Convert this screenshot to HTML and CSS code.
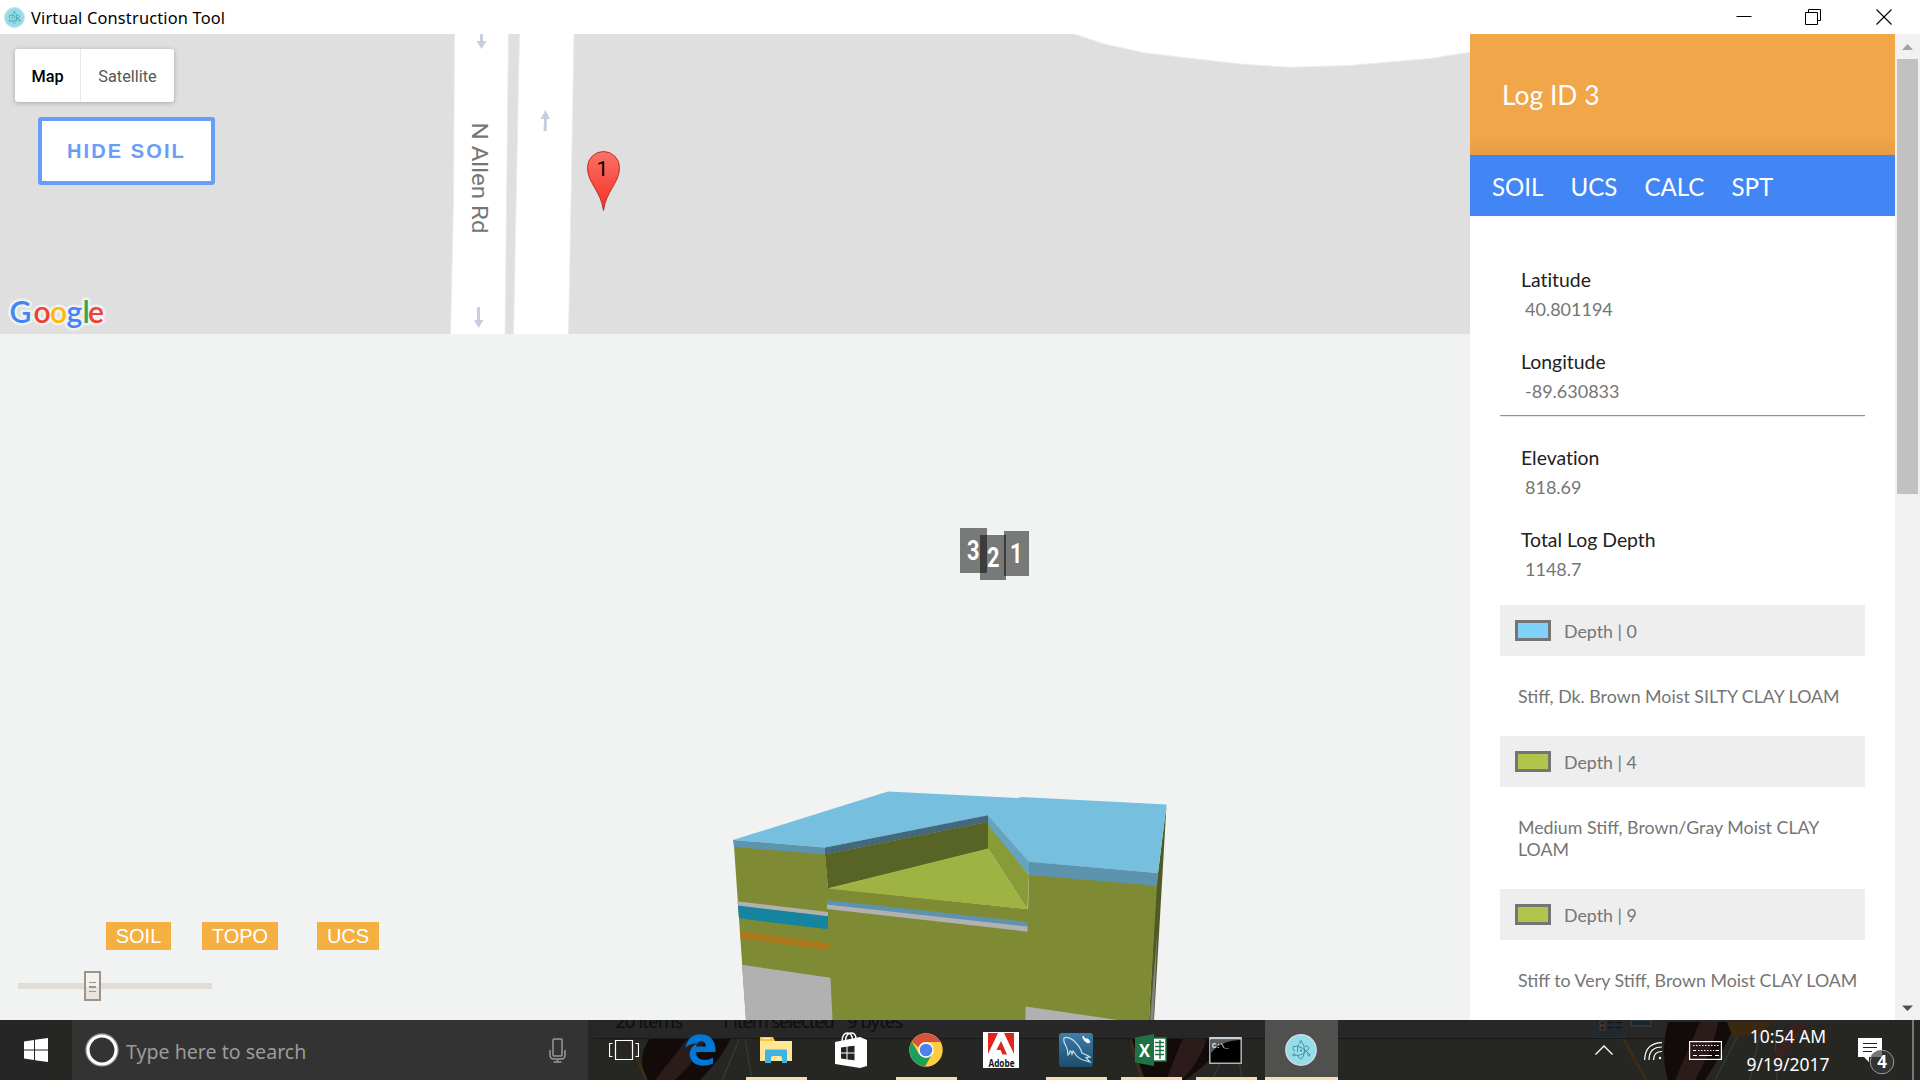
FILE: index.html
```html
<!DOCTYPE html>
<html lang="en">
<head>
<meta charset="utf-8">
<title>Virtual Construction Tool</title>
<link rel="stylesheet" href="styles.css">
</head>
<body>
<svg width="0" height="0" class="defs">
  <defs>
    <symbol id="electron" viewBox="0 0 32 32">
      <circle cx="16" cy="16" r="15.200" fill="#92dfea" stroke="#d3dcdd" stroke-width="1.400"/>
      <g fill="none" stroke="#3d7a86" stroke-width="0.800">
        <path d="M9.500 17.500Q6.500 14 8.500 12.500Q12 11 17.500 14.200Q22.500 17.500 23.500 20"/>
        <path d="M20 12Q24 12 24 13.800Q23.500 17 17.500 20Q13 22 10 21.200"/>
        <path d="M16.500 8Q19.500 10 19.500 16Q19 23.500 16 25Q13.500 24.500 12.700 21M12.500 18Q12 12.500 14 9.500"/>
        <circle cx="8.900" cy="20.800" r="1.100"/><circle cx="23.800" cy="20.800" r="1.100"/><circle cx="15.700" cy="7.700" r="1"/>
      </g>
      <circle cx="16" cy="16.500" r="1" fill="#3d7a86"/>
    </symbol>
  </defs>
</svg>
<div class="screen">
  <header class="titlebar">
    <svg class="app-icon" width="21" height="21"><use href="#electron"/></svg>
    <span class="app-title">Virtual Construction Tool</span>
    <div class="window-controls">
      <svg width="16" height="16"><path d="M0.500 7.500H15.500" stroke="#000"/></svg>
      <svg width="16" height="16" fill="none" stroke="#000"><path d="M0.500 3.500h12v12h-12zM3.500 3.500v-3h12v11h-3"/></svg>
      <svg class="close" width="16" height="16"><path d="M0.500 0.500l15 15M15.500 0.500l-15 15" stroke="#000" stroke-width="1.100"/></svg>
    </div>
  </header>

  <main class="main">
    <div class="workspace">
      <section class="map">
        <svg class="map-canvas" width="1470" height="300" viewBox="0 34 1470 300">
          <defs>
            <linearGradient id="pin" x1="0" y1="0" x2="0" y2="1"><stop offset="0" stop-color="#fb7268"/><stop offset="1" stop-color="#f52f24"/></linearGradient>
          </defs>
          <rect y="34" width="1470" height="300" fill="#dfdfdf"/>
          <g fill="#fff" stroke="#ececec">
            <path d="M1073 33.500L1102 43.500L1145 53L1240 64L1290 67.300L1350 65.500L1430 58.500L1471 52V33z"/>
            <path d="M454.500 33L453.500 200L450.500 335H505L508.500 33z"/>
            <path d="M519.500 33L513.500 335H568.500L574 33z"/>
          </g>
          <g fill="#c9cde0">
            <path d="M480 34h3v7h3.500l-5 8l-5-8h3.500z"/>
            <path d="M545.500 110l4.500 9h-3l-.5 12h-3l.5-12h-3.500z"/>
            <path d="M477 307h3v13h3.500l-5 8l-4.500-8h3z"/>
          </g>
          <text class="road-label" transform="translate(472 122.500) rotate(90)" textLength="111" lengthAdjust="spacingAndGlyphs">N Allen Rd</text>
          <path d="M603.500 210.500C601 191 587.500 183 587.500 167.500a16 16 0 0 1 32 0C619.500 183 606 191 603.500 210.500z" fill="url(#pin)" stroke="#b8312b"/>
          <text class="pin-label" x="602.500" y="175.500" text-anchor="middle">1</text>
          <g id="logo-letters" class="logo">
            <g class="logo-halo"><text y="323"><tspan x="9.500">G</tspan><tspan x="33.500">o</tspan><tspan x="50">o</tspan><tspan x="66.500">g</tspan><tspan x="82.500">l</tspan><tspan x="88">e</tspan></text></g>
            <text y="323"><tspan x="9.500" class="g-blue">G</tspan><tspan x="33.500" class="g-red">o</tspan><tspan x="50" class="g-yellow">o</tspan><tspan x="66.500" class="g-blue">g</tspan><tspan x="82.500" class="g-green">l</tspan><tspan x="88" class="g-red">e</tspan></text>
          </g>
        </svg>
        <div class="map-overlay">
          <div class="map-types"><span class="map-type active">Map</span><span class="map-type">Satellite</span></div>
          <button class="hide-soil">HIDE SOIL</button>
        </div>
      </section>

      <section class="scene">
        <svg class="scene-canvas" width="1470" height="686" viewBox="0 334 1470 686">
          <g class="solid">
            <path fill="#4f5a24" d="M1166.500 805L1158 873L1156 886L1149 1020H1154z"/>
            <path fill="#858585" d="M1157.500 930L1150 1020H1153.500z"/>
            <path fill="#7e8b34" d="M734 846L825 853L828 888L1028 909L1029 874L1157 885L1149 1020H746z"/>
            <path fill="#77bfdf" d="M733 840L888 791.500L1018 798L1021 797L1166.500 804.500L1158 873L1029 862L988 815.500L825 847.500z"/>
            <path fill="#5c94ae" d="M733 840L825 847.500V854.500L734 847zM1029 861.700L1158 873L1157 885.700L1029 875z"/>
            <path fill="#44697d" d="M825 847.500L988 815.200V822L825 854.500z"/>
            <path fill="#586326" d="M825 854.300L988 821.800V849L828 888.500z"/>
            <path fill="#899a38" d="M988 822L1029 875L1027.500 909.500L988 848.500z"/>
            <path fill="#66a3bf" d="M988 815.200L1029 861.700V875L988 825z"/>
            <path fill="#9fb342" d="M828 888.500L988 848.500L1027.500 909.300z"/>
            <path fill="#b1b1b1" d="M737 901.300L828 912V916.500L738 906zM742 964.800L830.500 977.700L832.500 1020H746zM827 904L1027.500 926V931.700L827 909zM1025.500 1006.400L1118 1020H1025.500z"/>
            <path fill="#15849f" d="M738 905.600L828 916.200V929.300L739 918.300z"/>
            <path fill="#ab781c" d="M740 931.400L829 943.300L829.300 950.200L740.500 938.300z"/>
            <path fill="#5c94ae" d="M827 900L1027.500 921.900V926.600L827 904.600z"/>
          </g>
          <g fill="#000" fill-opacity=".5">
            <rect x="960" y="528" width="27" height="45"/><rect x="980" y="535" width="26" height="45"/><rect x="1004" y="531" width="25" height="45"/>
          </g>
          <g class="log-label">
            <text x="967" y="560" textLength="12.500" lengthAdjust="spacingAndGlyphs">3</text>
            <text x="987" y="567" textLength="12.500" lengthAdjust="spacingAndGlyphs">2</text>
            <text x="1010" y="563" textLength="12.500" lengthAdjust="spacingAndGlyphs">1</text>
          </g>
        </svg>
        <div class="scene-controls">
          <div class="layer-buttons">
            <button class="layer soil">SOIL</button><button class="layer topo">TOPO</button><button class="layer ucs">UCS</button>
          </div>
          <div class="slider"><div class="slider-thumb"><i></i><i></i><i></i></div></div>
        </div>
      </section>
    </div>

    <aside class="panel">
      <div class="panel-head">Log ID 3</div>
      <nav class="tabs"><span>SOIL</span><span>UCS</span><span>CALC</span><span>SPT</span></nav>
      <div class="panel-body">
        <dl class="facts"><dt>Latitude</dt><dd>40.801194</dd><dt>Longitude</dt><dd>-89.630833</dd></dl>
        <hr class="rule">
        <dl class="facts second"><dt>Elevation</dt><dd>818.69</dd><dt>Total Log Depth</dt><dd>1148.7</dd></dl>
        <div class="depth"><i class="swatch blue"></i>Depth | 0</div>
        <p class="desc">Stiff, Dk. Brown Moist SILTY CLAY LOAM</p>
        <div class="depth"><i class="swatch"></i>Depth | 4</div>
        <p class="desc">Medium Stiff, Brown/Gray Moist CLAY<br>LOAM</p>
        <div class="depth"><i class="swatch"></i>Depth | 9</div>
        <p class="desc">Stiff to Very Stiff, Brown Moist CLAY LOAM</p>
      </div>
    </aside>
    <div class="scrollbar">
      <svg width="25" height="25"><path d="M7 16l5.500-6l5.500 6z" fill="#a3a3a3"/></svg>
      <div class="scroll-thumb"></div>
      <svg class="scroll-down" width="25" height="25"><path d="M7 10.500h11l-5.500 5.500z" fill="#505050"/></svg>
    </div>
  </main>

  <footer class="taskbar">
    <svg class="taskbar-backdrop" width="1920" height="60" viewBox="0 1020 1920 60">
      <rect y="1020" width="1920" height="60" fill="#262623"/>
      <path d="M0 1020H52L42 1080H0zM960 1020h86v60h-86z" fill="#262626"/>
      <path d="M650 1038Q635 1060 648 1080H700Q722 1058 731 1038zM1127 1038Q1140 1062 1145 1080H1185Q1215 1060 1224 1038zM1668 1022Q1660 1055 1668 1080H1705Q1728 1045 1735 1022z" fill="#120b0a"/>
      <path d="M688 1038L655 1080H675Q695 1062 707 1038zM1183 1038L1166 1080H1182Q1200 1062 1207 1038zM1700 1022L1675 1080H1695Q1715 1045 1718 1022z" fill="#2b1c1b"/>
      <path d="M629 1038L646 1080M1130 1038L1142 1080M1623 1038L1646 1080" stroke="#3b2d16" stroke-width="3"/>
      <path d="M740 1038L722 1080M745 1038L752 1080M1232 1038L1212 1080M1236 1038L1242 1080M1745 1022L1715 1080M1760 1032L1750 1080M1775 1032L1777 1080" stroke="#333a34" stroke-width="1.500" fill="none"/>
      <path d="M1727 1022H1773L1760 1034L1733 1038z" fill="#3a2810"/>
      <path d="M1790 1025L1808 1022L1785 1055L1765 1070z" fill="#38211f"/>
      <path d="M593 1020H1665V1038H593z" fill="#272727"/>
      <path d="M593 1038.500H1665" stroke="#191a18"/>
      <path d="M1594.500 1020v17.500h31V1020" fill="#22292d" stroke="#183442"/>
      <path d="M1600 1021h5v4h-5zM1600 1026h5v4h-5z" stroke="#4a4338" fill="#2a1717"/>
      <path d="M1608 1022.500h5m3 0h6M1608 1027.500h5m3 0h6" stroke="#111"/>
      <path d="M1631 1020h20v6h-20z" fill="#1a262d" stroke="#444"/>
      <g class="ghost"><text x="615" y="1028" textLength="68">20 items</text><text x="720" y="1028" textLength="115">1 item selected</text><text x="847" y="1028" textLength="56">9 bytes</text></g>
      <rect x="1912" y="1020" width="2" height="60" fill="#777"/>
    </svg>

    <div class="start"><svg width="24" height="24" fill="#fff"><path d="M0 3.500L10 2v9.500H0zM11 1.800L24 0v11.500H11zM0 12.500h10V22L0 20.500zM11 12.500h13V24l-13-1.800z"/></svg></div>
    <div class="search">
      <svg width="34" height="34" fill="none"><circle cx="17" cy="17" r="16" stroke="#8b8b8b" stroke-width="1.500"/><circle cx="17" cy="17" r="14" stroke="#fff" stroke-width="3.200"/></svg>
      <span class="search-text">Type here to search</span>
      <svg class="mic" width="17" height="25" fill="none" stroke="#999" stroke-width="1.500"><rect x="4" y="1" width="9" height="17" rx="1"/><path d="M1 12v5q0 4 4 4h7q4 0 4-4v-5M8.500 21v3M4.500 24h8"/></svg>
    </div>
    <div class="apps">
      <div class="app"><svg width="30" height="20" fill="none" stroke="#fff" stroke-width="1.200"><path d="M6.500 0.500h17v19h-17zM3.500 3.500h-3v13h3M26.500 3.500h3v13h-3"/></svg></div>
      <div class="app"><svg width="31" height="32" viewBox="0 0 31 32"><path fill="#0078d7" d="M0.500 14Q3 .5 15.500 .3Q29 .5 30.500 14.500V18H10.500Q11.500 25.500 19 26Q24 26 28 23.500V29.500Q23 32 17 31.800Q5 30.500 4.500 19.500Q5 13 12 9.500Q4.500 9 .5 14zM11 12.500H20.800Q20.500 7.200 16.200 7.200Q11.800 7.500 11 12.500z"/></svg></div>
      <div class="app open"><svg width="32" height="28" viewBox="0 0 32 28"><path fill="#f8c535" d="M0 1h13l2 4h17v5H0z"/><path fill="#ffe694" d="M0 5h32v20H0z"/><path d="M3 2.500h7" stroke="#fff3c6"/><path fill="#3eb3e6" d="M5 15q0-1.500 1.500-1.500h19Q27 13.500 27 15v12h-5v-5q0-2-2-2h-7q-2 0-2 2v5H5z"/></svg></div>
      <div class="app"><svg width="32" height="36" viewBox="0 0 32 36"><path d="M7 9Q7.500 1 12.500 1q4 0 5 6M10.500 8Q11.500 1 16 1q4.500 0 5 5" fill="none" stroke="#fff" stroke-width="1.500"/><path fill="#fff" d="M0 10L25 5l7 3v26l-7 2L0 32z"/><path fill="#222" d="M6 15.500l5.500-.7v5.700H6zM12.500 14.600l7-.9v6.800h-7zM6 21.500h5.500v5.700L6 26.500zM12.500 21.500h7v6.800l-7-.9z"/></svg></div>
      <div class="app open"><svg width="34" height="34" viewBox="0 0 34 34"><circle cx="17" cy="17" r="16.700" fill="#ffcd42"/><path fill="#d9513f" d="M2.700 8.500A16.700 16.700 0 0 1 31.500 9H17a8 8 0 0 0-7.500 5.500z"/><path fill="#1d9f5b" d="M2.700 8.500A16.700 16.700 0 0 0 16 33.600L22.500 22a8 8 0 0 1-12.500-1z"/><circle cx="17" cy="17" r="7.700" fill="#fff"/><circle cx="17" cy="17" r="6.300" fill="#4a83ee"/></svg></div>
      <div class="app"><svg width="36" height="36" viewBox="0 0 36 36"><path fill="#fff" d="M0 0h36v36H0z"/><path fill="#e1251b" d="M5 1h10L5 22zM21 1h10v21zM18 9l6 13.500h-4.500l-2-4.500h-4z"/><text x="5.500" y="34.500" class="adobe" textLength="26" lengthAdjust="spacingAndGlyphs">Adobe</text></svg></div>
      <div class="app open"><svg width="34" height="34" viewBox="0 0 34 34"><defs><linearGradient id="db" x1="0" y1="0" x2="0" y2="1"><stop offset="0" stop-color="#3f7dab"/><stop offset="1" stop-color="#1c4d6c"/></linearGradient></defs><rect width="34" height="34" rx="3" fill="url(#db)"/><path d="M9 22Q9 17 7 13Q4 8 5 5Q9 3 14 7Q21 13 23 20Q28 22 31 24L27 24.500L31 29L26 27.500Q20 26 17 22L14 18L13 21Q12 17 11 18Q11 21 9 22z" fill="none" stroke="#c9e0ec" stroke-width="1.200"/><path d="M24 3l2 3l3 0l2 3l-2 1l-3-2l-2-3z" fill="#fff" stroke="#fff"/></svg></div>
      <div class="app open"><svg width="32" height="32" viewBox="0 0 32 32"><path fill="#fff" stroke="#207245" stroke-width="1.500" d="M16 4h15v23H16z"/><path fill="none" stroke="#207245" stroke-width="1.400" d="M20 8.500h9M20 12.500h9M20 16.500h9M20 20.500h9M25 6v19"/><path fill="#207245" d="M0 3.500L19 0v32L0 28.500z"/><text x="4" y="22.500" class="excel" textLength="11" lengthAdjust="spacingAndGlyphs">X</text></svg></div>
      <div class="app open"><svg width="33" height="27" viewBox="0 0 33 27"><path fill="#000" stroke="#aab4bb" stroke-width="1.500" d="M.8.8h31.400v25.400H.8z"/><path fill="#c4d1da" d="M1 0h31v2.500H1z"/><path fill="#5b5b5b" d="M1.500 3h29Q10 4 1.500 17z"/><text x="3" y="10.500" class="cmd">C:\_</text></svg></div>
      <div class="app open current"><svg width="32" height="32"><use href="#electron"/></svg></div>
    </div>
    <div class="tray">
      <svg class="chevron" width="18" height="10"><path d="M.5 9.500L9 1l8.500 8.500" fill="none" stroke="#fff" stroke-width="1.400"/></svg>
      <svg class="wifi" width="18" height="18" fill="none" stroke="#fff" stroke-width="1.200"><path d="M.7 18Q1 1 18 .7M5 18Q5 5 18 5M9.500 18Q9.500 9.500 18 9.500"/><circle cx="16" cy="16" r="1.200" fill="#fff" stroke="none"/></svg>
      <svg class="keyboard" width="33" height="19" fill="none" stroke="#fff"><rect x=".6" y=".6" width="31.800" height="17.800" stroke-width="1.200"/><path d="M4 4.500h26M9 9.500h16" stroke-dasharray="1.500 1.500"/><path d="M4 9.500h3M26.500 9.500h3.500M4 14.500h4M10 14.500h13M26 14.500h4"/></svg>
      <div class="clock"><span>10:54 AM</span><span class="date">9/19/2017</span></div>
      <svg class="notice" width="38" height="38" viewBox="0 0 38 38"><path fill="#fff" d="M0 0h24v19H11v5l-5-5H0z"/><path d="M5 5.500h14M5 9.500h14M5 13.500h9" stroke="#222"/><circle cx="24" cy="24" r="11.800" fill="#333" stroke="#999"/><path d="M12.500 18.500A12 12 0 0 1 24 12.500V19H15z" fill="#777"/><text x="24" y="30" text-anchor="middle" class="count">4</text></svg>
    </div>
  </footer>
</div>
</body>
</html>
```
FILE: styles.css
```css
* { box-sizing: border-box; }
body { margin: 0; background: #fff; overflow: hidden; }
svg { display: block; flex: none; }
.defs { position: absolute; }
.screen { display: flex; flex-direction: column; width: 1920px; height: 1080px; }
button { border: 0; padding: 0; margin: 0; }

.titlebar { display: flex; align-items: center; height: 34px; padding: 0 28px 0 3.5px; font: 16.4px/34px "Noto Sans", sans-serif; color: #000; }
.app-title { margin-left: 6.5px; padding-top: 1px; letter-spacing: 0.17px; white-space: nowrap; }
.app-icon { margin-top: 1px; }
.window-controls { display: flex; gap: 53px; margin-left: auto; margin-bottom: 1px; }
.close { margin-left: 2px; }

.main { display: flex; height: 986px; }
.workspace { width: 1470px; display: flex; flex-direction: column; }
.map, .scene { display: grid; }
.map > *, .scene > * { grid-area: 1 / 1; }
.map { height: 300px; }
.scene { height: 686px; background: #f0f3f2; }

.road-label { font: 22px Roboto, sans-serif; fill: #757575; }
.pin-label { font: 21px Roboto, sans-serif; fill: #000; }
.logo { font: 600 30px Lato, sans-serif; }
.logo-halo { fill: #f1f1f1; stroke: #f1f1f1; stroke-width: 5px; stroke-linejoin: round; }
.g-blue { fill: #4285f4; }
.g-red { fill: #ea4335; }
.g-yellow { fill: #fbbc05; }
.g-green { fill: #34a853; }

.map-overlay { display: flex; flex-direction: column; align-items: flex-start; gap: 15px; padding: 15px; z-index: 1; }
.map-types { display: flex; height: 53px; background: #fff; border-radius: 3px; box-shadow: 0 1px 5px rgba(0,0,0,.25); font: 16.3px/55px Roboto, sans-serif; color: #565656; }
.map-type { width: 93px; text-align: center; }
.map-type.active { width: 66px; color: #000; font-weight: 500; border-right: 1px solid #e8e8e8; }
.hide-soil { margin-left: 23px; width: 177px; height: 68px; padding: 0; border: 4px solid #689df8; border-radius: 3px; background: #fff; color: #689df8; font: bold 20px "Liberation Sans", sans-serif; letter-spacing: 2.1px; }

.log-label { font: bold 28px Roboto, sans-serif; fill: #fff; }
.scene-controls { display: flex; flex-direction: column; justify-content: flex-end; align-items: flex-start; padding: 0 0 19px 18px; z-index: 1; }
.layer-buttons { display: flex; margin-left: 88px; }
.layer { height: 28px; background: #f5b041; color: #fff; font: 20px/28px "Liberation Sans", sans-serif; }
.soil { width: 65px; }
.topo { width: 76px; margin-left: 31px; }
.ucs { width: 62px; margin-left: 39px; }
.slider { display: flex; align-items: center; width: 194px; height: 30px; margin-top: 21px; padding-left: 66px; background: linear-gradient(#e2dcd6, #e2dcd6) 0 50% / 100% 6px no-repeat; }
.slider-thumb { display: flex; flex-direction: column; justify-content: center; align-items: center; gap: 3px; width: 17px; height: 30px; border: 2px solid #9b948a; background: linear-gradient(#f5f2ee 55%, #eae4e0 55%); padding-top: 2px; }
.slider-thumb i { width: 7px; height: 1px; background: #9b948a; }
.slider-thumb i:nth-child(2) { height: 2px; }

.panel { width: 425px; font-family: Lato, sans-serif; background: #fff; }
.panel-head { height: 121px; padding-left: 32px; font-size: 26.4px; line-height: 122px; color: #fff; background: linear-gradient(#f1a64a 83%, #e79d47); }
.tabs { display: flex; gap: 27px; height: 61px; padding-left: 22px; background: #4286f5; color: #fff; font-size: 24.1px; line-height: 64px; }
.panel-body { padding: 49px 30px 0; }
.facts { margin: 0; padding-left: 21px; }
.facts dt { font-size: 19.4px; line-height: 30px; color: #212121; font-variant-ligatures: none; }
.facts dd { margin: 0 0 23px; padding-left: 4px; font-size: 18px; line-height: 29px; color: #757575; }
.facts dd:last-child { margin-bottom: 9px; }
.rule { height: 2px; margin: 0; border: 0; border-top: 1px solid #909090; border-bottom: 1px solid #e8e8e8; }
.second { padding-top: 26px; }
.facts.second dd:last-child { margin-bottom: 21px; }
.depth { display: flex; align-items: center; height: 51px; padding-left: 15px; background: #eee; color: #757575; font-size: 17.8px; line-height: 54px; }
.swatch { width: 36px; height: 21px; margin-right: 13px; border: 3px solid #757575; background: #afc54b; }
.swatch.blue { background: #81d2f8; }
.desc { margin: 0; padding: 29px 0 29px 18px; font-size: 17.8px; line-height: 22px; color: #757575; white-space: nowrap; }
.scrollbar { display: flex; flex-direction: column; width: 25px; background: #f1f1f1; }
.scroll-thumb { width: 21px; height: 435px; margin-left: 2px; background: #c1c1c1; }
.scroll-down { margin-top: auto; }

.taskbar { position: relative; display: flex; height: 60px; }
.taskbar-backdrop { position: absolute; left: 0; top: 0; }
.taskbar > div { z-index: 1; }
.ghost { font: 18.5px "Noto Sans", sans-serif; fill: #0c0e12; }
.start { display: flex; align-items: center; width: 72px; padding-left: 24px; }
.search { display: flex; align-items: center; width: 516px; background: #333; padding: 0 22px 0 13px; }
.search-text { margin-left: 7px; padding-top: 2px; font: 19.6px "Noto Sans", sans-serif; color: #9b9b9b; white-space: nowrap; }
.mic { margin-left: auto; }
.apps { display: flex; gap: 2px; }
.app { display: flex; align-items: center; justify-content: center; width: 73px; height: 60px; padding-right: 2px; }
.app:first-child { width: 75px; padding-right: 4px; }
.open { background: linear-gradient(#fdd9af, #fdd9af) 50% 100% / 61px 3px no-repeat; }
.current { background: linear-gradient(#fdd9af, #fdd9af) 50% 100% / 73px 3px no-repeat #50504e; }
.adobe { font: bold 10px "Open Sans", sans-serif; fill: #111; }
.excel { font: bold 18px "Open Sans", sans-serif; fill: #fff; }
.cmd { font: bold 7px "Liberation Mono", monospace; fill: #eee; }
.tray { display: flex; align-items: center; flex: 1; padding-left: 257px; }
.wifi { margin-left: 31px; margin-top: 2px; }
.keyboard { margin-left: 27px; }
.clock { display: flex; flex-direction: column; align-items: center; width: 90px; margin-left: 21px; color: #fff; font: 17.5px/28px "Noto Sans", sans-serif; white-space: nowrap; }
.notice { margin-top: 14px; margin-left: 25px; }
.count { font: bold 17px "Noto Sans", sans-serif; fill: #fff; }
```
